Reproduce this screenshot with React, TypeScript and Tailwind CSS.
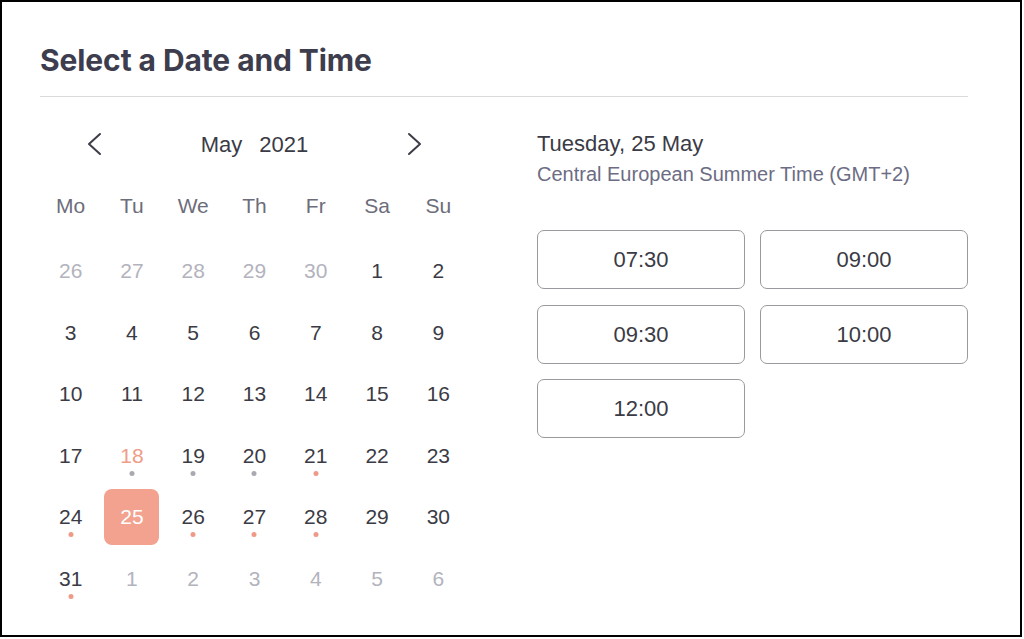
import React from "react"

type Day = { n: number; muted?: boolean; today?: boolean; selected?: boolean; dot?: "grey" | "salmon" }

const weekdays = ["Mo", "Tu", "We", "Th", "Fr", "Sa", "Su"]

const days: Day[] = [
  { n: 26, muted: true }, { n: 27, muted: true }, { n: 28, muted: true }, { n: 29, muted: true }, { n: 30, muted: true }, { n: 1 }, { n: 2 },
  { n: 3 }, { n: 4 }, { n: 5 }, { n: 6 }, { n: 7 }, { n: 8 }, { n: 9 },
  { n: 10 }, { n: 11 }, { n: 12 }, { n: 13 }, { n: 14 }, { n: 15 }, { n: 16 },
  { n: 17 }, { n: 18, today: true, dot: "grey" }, { n: 19, dot: "grey" }, { n: 20, dot: "grey" }, { n: 21, dot: "salmon" }, { n: 22 }, { n: 23 },
  { n: 24, dot: "salmon" }, { n: 25, selected: true }, { n: 26, dot: "salmon" }, { n: 27, dot: "salmon" }, { n: 28, dot: "salmon" }, { n: 29 }, { n: 30 },
  { n: 31, dot: "salmon" }, { n: 1, muted: true }, { n: 2, muted: true }, { n: 3, muted: true }, { n: 4, muted: true }, { n: 5, muted: true }, { n: 6, muted: true },
]

const slots = ["07:30", "09:00", "09:30", "10:00", "12:00"]

function Chevron({ dir }: { dir: "left" | "right" }) {
  return (
    <svg width="16" height="24" viewBox="0 0 16 24" fill="none" stroke="#3d3d48" strokeWidth="2" strokeLinecap="round" strokeLinejoin="round">
      {dir === "left" ? <polyline points="14,2 3,12 14,22" /> : <polyline points="2,2 13,12 2,22" />}
    </svg>
  )
}

export default function App() {
  return (
    <div className="w-[1022px] h-[637px] border-2 border-black bg-white pl-[38px] pr-[52px] font-['Liberation_Sans',Arial,sans-serif] text-[#3b3b45]">
      <h1 className="pt-[40px] h-[94px] text-[30px] leading-[36px] font-bold tracking-[-0.1px] text-[#3d3d4e] font-['Inter',sans-serif]">
        Select a Date and Time
      </h1>
      <div className="h-px bg-[#dadada]" />

      <div className="flex pt-[23px]">
        <div className="w-[430px]">
          <div className="h-[48px] flex items-center justify-between px-[46px]">
            <Chevron dir="left" />
            <div className="flex gap-[17px] text-[22px]">
              <span>May</span>
              <span>2021</span>
            </div>
            <Chevron dir="right" />
          </div>

          <div className="grid grid-cols-7 h-[62px] items-center mt-[7px] mb-[3px]">
            {weekdays.map((w) => (
              <div key={w} className="text-center text-[21px] text-[#6d6d7a]">{w}</div>
            ))}
          </div>

          <div className="grid grid-cols-7">
            {days.map((d, i) => (
              <div key={i} className="relative h-[61.6px] flex items-center justify-center">
                {d.selected ? (
                  <div className="w-[55px] h-[56px] rounded-[8px] bg-[#f2a28e] text-white flex items-center justify-center text-[21px]">
                    {d.n}
                  </div>
                ) : (
                  <span
                    className={
                      "text-[21px] " +
                      (d.muted ? "text-[#b3b3bd]" : d.today ? "text-[#ef9c88]" : "text-[#3b3b45]")
                    }
                  >
                    {d.n}
                  </span>
                )}
                {d.dot && (
                  <span
                    className={
                      "absolute left-1/2 -translate-x-1/2 top-[calc(50%+15px)] w-[5px] h-[5px] rounded-full " +
                      (d.dot === "grey" ? "bg-[#a9a9b2]" : "bg-[#ee9a86]")
                    }
                  />
                )}
              </div>
            ))}
          </div>
        </div>

        <div className="ml-[68px] w-[431px]">
          <div className="pt-[10px] text-[22px] leading-[28px] text-[#3b3b45]">Tuesday, 25 May</div>
          <div className="mt-[4px] text-[20px] leading-[24px] text-[#6c6c84]">Central European Summer Time (GMT+2)</div>
          <div className="mt-[44px] grid grid-cols-[208px_208px] gap-x-[15px] gap-y-[15.5px]">
            {slots.map((s) => (
              <button
                key={s}
                className="h-[59px] rounded-[7px] border-[1.5px] border-[#9a9a9e] bg-white text-[22px] text-[#3b3b45]"
              >
                {s}
              </button>
            ))}
          </div>
        </div>
      </div>
    </div>
  )
}
